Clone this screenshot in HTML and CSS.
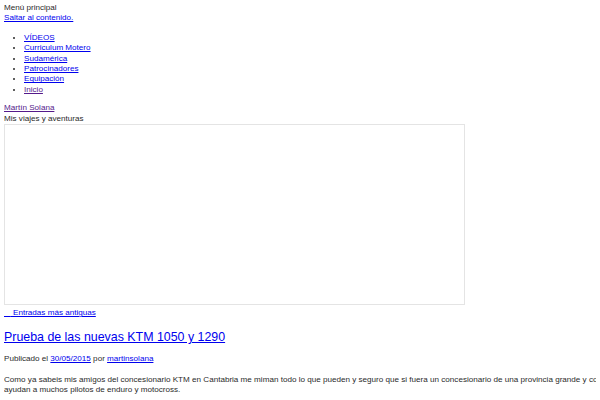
FILE: index.html
```html
<!DOCTYPE html>
<html lang="es">
<head>
    <meta charset="UTF-8">
    <title>Martín Solana | Mis viajes y aventuras</title>
    <link rel="stylesheet" href="styles.css">
</head>
<body>
    <div class="site">
        <header class="site-header">
            <nav class="main-nav">
                <div class="menu-toggle">Menú principal</div>
                <a class="skip-link" href="#content">Saltar al contenido.</a>
                <ul class="menu">
                    <li><a href="#">VÍDEOS</a></li>
                    <li><a href="#">Curriculum Motero</a></li>
                    <li><a href="#">Sudamérica</a></li>
                    <li><a href="#">Patrocinadores</a></li>
                    <li><a href="#">Equipación</a></li>
                    <li><a class="visited" href="#">Inicio</a></li>
                </ul>
            </nav>
            <div class="site-title"><a class="visited" href="#">Martín Solana</a></div>
            <div class="site-desc">Mis viajes y aventuras</div>
            <div class="header-video"></div>
        </header>

        <main id="content">
            <div class="nav-previous"><a href="#"><span class="arrow">&nbsp;&nbsp;&nbsp;</span> Entradas más antiguas</a></div>

            <article class="post">
                <h2 class="entry-title"><a href="#">Prueba de las nuevas KTM 1050 y 1290</a></h2>
                <div class="entry-meta">Publicado el <a href="#">30/05/2015</a> por <a href="#">martinsolana</a></div>
                <div class="entry-content">
                    <p>Como ya sabeis mis amigos del concesionario KTM en Cantabria me miman todo lo que pueden y seguro que si fuera un concesionario de una provincia grande y con muchos medios también me<br>ayudan a muchos pilotos de enduro y motocross.</p>
                </div>
            </article>
        </main>
    </div>
</body>
</html>
```

FILE: styles.css
```css
html {
    overflow: hidden;
}

body {
    margin: 3px 4px;
    font-family: "Liberation Sans", Arial, sans-serif;
    font-size: 8.1px;
    line-height: 10.4px;
    color: #2a2a2a;
    background: #fff;
}

a {
    color: #0000ee;
}

a.visited {
    color: #551a8b;
}

.menu {
    margin: 9px 0 8px;
    padding-left: 20px;
}

.header-video {
    width: 459px;
    height: 179px;
    border: 1px solid #e4e4e4;
}

.nav-previous {
    margin-top: 3px;
}

.entry-title {
    font-size: 12.4px;
    line-height: 14px;
    font-weight: normal;
    margin: 12px 0 10px;
}

.entry-meta {
    margin-bottom: 10px;
}

.entry-content p {
    width: 800px;
    margin: 0;
}
```
